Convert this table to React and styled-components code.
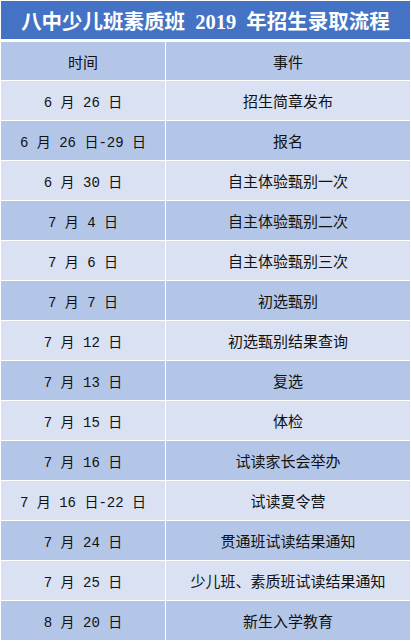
import React from 'react';
import styled, { createGlobalStyle } from 'styled-components';

const GlobalStyle = createGlobalStyle`
  html, body {
    margin: 0;
    padding: 0;
    background: #ffffff;
  }
`;

const Page = styled.div`
  width: 411px;
  height: 641px;
  padding: 1px 1px 0 1px;
  box-sizing: border-box;
  background: #ffffff;
  display: flex;
  flex-direction: column;
  overflow: hidden;
`;

const Title = styled.div`
  flex: 0 0 38px;
  display: flex;
  align-items: center;
  justify-content: center;
  background: #4472c4;
  color: #ffffff;
  font-family: "Liberation Serif", "Noto Sans CJK SC", serif;
  font-weight: 700;
  font-size: 20.5px;
  word-spacing: 5px;
  margin-bottom: 3px;
  white-space: pre;
`;

const Table = styled.div`
  display: grid;
  grid-template-columns: 164px 1fr;
  column-gap: 1px;
  row-gap: 1px;
`;

const Cell = styled.div`
  height: ${({ $head }) => ($head ? '38px' : '39px')};
  display: flex;
  align-items: center;
  justify-content: center;
  background: ${({ $dark }) => ($dark ? '#b4c6e7' : '#d9e1f2')};
  color: #111111;
  font-family: "Noto Sans CJK SC", sans-serif;
  font-size: 15px;
  white-space: pre;
`;

const DateCell = styled(Cell)`
  font-family: "Liberation Mono", "Noto Sans CJK SC", monospace;
  font-size: 14px;
`;

const rows = [
  ['6 月 26 日', '招生简章发布'],
  ['6 月 26 日-29 日', '报名'],
  ['6 月 30 日', '自主体验甄别一次'],
  ['7 月 4 日', '自主体验甄别二次'],
  ['7 月 6 日', '自主体验甄别三次'],
  ['7 月 7 日', '初选甄别'],
  ['7 月 12 日', '初选甄别结果查询'],
  ['7 月 13 日', '复选'],
  ['7 月 15 日', '体检'],
  ['7 月 16 日', '试读家长会举办'],
  ['7 月 16 日-22 日', '试读夏令营'],
  ['7 月 24 日', '贯通班试读结果通知'],
  ['7 月 25 日', '少儿班、素质班试读结果通知'],
  ['8 月 20 日', '新生入学教育'],
];

const App = () => (
  <>
    <GlobalStyle />
    <Page>
      <Title>八中少儿班素质班 2019 年招生录取流程</Title>
      <Table>
        <Cell $head $dark>时间</Cell>
        <Cell $head $dark>事件</Cell>
        {rows.map(([date, event], i) => (
          <React.Fragment key={i}>
            <DateCell $dark={i % 2 === 1}>{date}</DateCell>
            <Cell $dark={i % 2 === 1}>{event}</Cell>
          </React.Fragment>
        ))}
      </Table>
    </Page>
  </>
);

export default App;
